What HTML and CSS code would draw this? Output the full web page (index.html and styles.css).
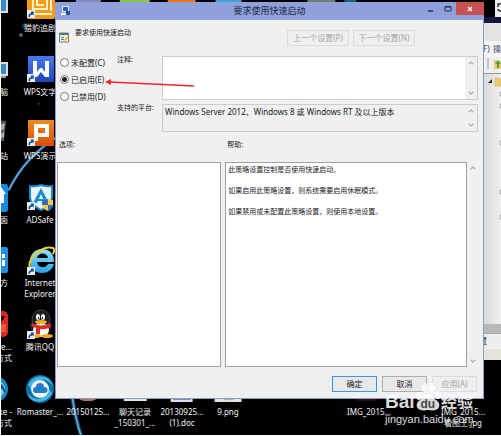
FILE: index.html
```html
<!DOCTYPE html>
<html lang="zh-CN">
<head>
<meta charset="utf-8">
<title>要求使用快速启动</title>
<link rel="stylesheet" href="styles.css">
</head>
<body>
<svg width="0" height="0" class="defs" aria-hidden="true">
  <defs>
    <linearGradient id="blueW" x1="0" y1="0" x2="0" y2="1"><stop offset="0" stop-color="#4a7af0"/><stop offset="1" stop-color="#1f45b8"/></linearGradient>
    <linearGradient id="orangeP" x1="0" y1="0" x2="0" y2="1"><stop offset="0" stop-color="#f08a1c"/><stop offset="1" stop-color="#d84e06"/></linearGradient>
    <linearGradient id="ie" x1="0" y1="0" x2="0" y2="1"><stop offset="0" stop-color="#8fe4fb"/><stop offset="1" stop-color="#2aa2e6"/></linearGradient>
    <symbol id="shortcut" viewBox="0 0 8 8"><rect width="8" height="8" fill="#e8edf2"/><path d="M1.500 7C1.300 4.600 2.400 3.400 4 3.300V1.500h2.800v3.400L5.600 4.600C4 4.600 3 5.400 3 7z" fill="#1c4d93"/></symbol>
    <symbol id="up" viewBox="0 0 6 4"><path d="M.7 3.300 3 1l2.300 2.300" fill="none" stroke="#b0b0b0" stroke-width="1.300"/></symbol>
    <symbol id="down" viewBox="0 0 6 4"><path d="M.7.7 3 3 5.300.7" fill="none" stroke="#b0b0b0" stroke-width="1.300"/></symbol>
  </defs>
</svg>
<main class="desktop">
  <svg class="wallpaper" viewBox="0 0 501 436" preserveAspectRatio="none" aria-hidden="true">
    <g fill="none" stroke-linecap="round">
      <path d="M8 190C19 168 33 152 58 136" stroke="#17496f" stroke-width="3"/>
      <path d="M8 190C19 168 33 152 58 136" stroke="#68b0e8" stroke-width="1.500"/>
      <path d="M71 396Q74 418 80 436" stroke="#17496f" stroke-width="4"/>
      <path d="M71 396Q74 418 80 436" stroke="#68b0e8" stroke-width="1.500"/>
    </g>
    <circle cx="20" cy="35" r="2" fill="#69566f"/><circle cx="24" cy="26" r="3" fill="#0b3845"/>
    <circle cx="38" cy="104" r="1" fill="#0a4a50"/><circle cx="364" cy="419" r="1" fill="#0b5a60"/>
    <path d="M119 0h30v2h-30z" fill="#8bc53f"/><path d="M167 0h28v2h-28z" fill="#e8741c"/><path d="M215 0h26v2h-26z" fill="#3aa6da"/><path d="M307 0h28v2h-28z" fill="#75806a"/><path d="M75 0h25v2H75z" fill="#8b87b8"/>
    <path d="M344 0h12v2h-12z" fill="#17647c"/>
    <ellipse cx="87" cy="398" rx="10" ry="4" fill="#a97b66"/>
    <path d="M123 396h23v6h-23zM170 396h22v7h-22zM214 396h27v7h-27z" fill="#dfe3ea"/>
    <path d="M172 400h18v1h-18z" fill="#7688b8"/><path d="M223 400h10v1h-10z" fill="#aaa"/>
    <path d="M357 398h20v4h-20z" fill="#340b12"/>
  </svg>

  <div class="item edge r0"><svg viewBox="0 0 26 26"><path d="M12 0h14v21H12z" fill="#ddd"/><path d="M12 2h12v17H12z" fill="#388dc5"/></svg></div>
  <div class="item edge r1"><svg viewBox="0 0 26 26"><path d="M12 6h14v14H12z" fill="#ddd"/><path d="M12 8h12v10H12z" fill="#388dc5"/><path d="M14 20h10v2H14z" fill="#999"/></svg><span>电脑</span></div>
  <div class="item edge r2"><svg viewBox="0 0 26 26"><path d="M12 0 24 1 22 21H12z" fill="#545b60"/><path d="m18 5 5-2-1 6-4 2zM18 14l4-2v5l-4 2z" fill="#a9adb0"/></svg><span>回收站</span></div>
  <div class="item edge r3"><svg viewBox="0 0 26 26"><rect width="26" height="28" rx="3" fill="#168be2"/><path d="m19 3 5 7h-2v9h-6v-9z" fill="#fff"/></svg><span>桌面</span></div>
  <div class="item edge r4"><svg viewBox="0 0 26 26"><rect width="26" height="26" rx="2" fill="#258fe4"/><path d="M16 7h3v12h-3zM20 7h3v4h-3zM20 13h3v6h-3z" fill="#fff"/></svg><span>官方</span></div>
  <div class="item edge wide r5"><svg viewBox="0 0 26 26"><rect width="26" height="26" rx="5" fill="#d72b21"/><path d="M16 4c4 3 5-1 7 2l-3 4h-4z" fill="#260706"/><path d="M16 13h8v8h-8z" fill="#ee5540"/></svg><span>Adobe...<br>方式</span></div>
  <div class="item edge wide r6"><svg viewBox="0 0 26 26"><circle cx="13" cy="13" r="13" fill="#1687c7"/><circle cx="14" cy="13" r="9" fill="#79c7ea"/><path d="M17 16l3-6 3 6" stroke="#075587" fill="none" stroke-width="2"/></svg><span>Make -<br>方式</span></div>

  <div class="item r0"><svg viewBox="0 0 26 26"><rect y="-2" width="28" height="29" rx="2" fill="#f39a18"/><path d="M6 0v17h14V6H10v7h7M5 22h20M24 0v19" stroke="#fff1c5" stroke-width="2" fill="none"/><use href="#shortcut" y="18" width="8" height="8"/></svg><span>猎豹追剧</span></div>
  <div class="item r1"><svg viewBox="0 0 26 26"><rect x="1" width="26" height="26" fill="url(#blueW)"/><path d="M6 5h4v11l3-4h2l3 4V5h4v16h-4l-4-5-4 5H6z" fill="#fff"/><use href="#shortcut" y="18" width="8" height="8"/></svg><span>WPS文字</span></div>
  <div class="item r2"><svg viewBox="0 0 26 26"><rect x="1" width="26" height="26" fill="url(#orangeP)"/><path fill-rule="evenodd" d="M7 4h15v13H11v4H7zM11 8v5h7V8z" fill="#fff"/><use href="#shortcut" y="18" width="8" height="8"/></svg><span>WPS演示</span></div>
  <div class="item r3"><svg viewBox="0 0 26 26"><path d="M2 1q6 1 12-1 6 2 12 1v12q0 10-12 14Q2 22 2 13z" fill="#168bd7"/><path d="M4 3q5 1 10-1 5 2 10 1v10q0 8-10 12Q4 20 4 13z" fill="#e9f5fb"/><path d="M14 4 6 19h4l4-9 4 9h4z" fill="#168bd7"/><path d="M10 16h8" stroke="#168bd7" stroke-width="2"/><path d="M15 16q4 0 6-1 2 1 5 1v5q-1 4-5 6-5-2-6-6z" fill="#f3ca50"/><path d="M15 16q4 0 6-1v6h-6zM21 21h5q-1 4-5 6z" fill="#3470b9"/><use href="#shortcut" y="18" width="8" height="8"/></svg><span>ADSafe</span></div>
  <div class="item r4"><svg viewBox="0 0 26 26"><path fill-rule="evenodd" d="M15 2c8 0 12 5 12 13H10c1 6 8 7 11 2h6c-2 6-6 9-12 9C7 26 3 21 3 14S8 2 15 2zM10 11h11C20 5 11 5 10 11z" fill="url(#ie)"/><path d="M4 22C-3 14 15-3 26 1c2 1 1 4 0 6" fill="none" stroke="#f4cc2c" stroke-width="2"/><use href="#shortcut" y="20" width="8" height="8"/></svg><span>Internet<br>Explorer</span></div>
  <div class="item r5"><svg viewBox="0 0 26 26"><ellipse cx="14" cy="15" rx="11" ry="10" fill="#171a22"/><ellipse cx="14" cy="8" rx="9" ry="9" fill="#171a22" stroke="#44474d"/><ellipse cx="14" cy="19" rx="8" ry="7" fill="#fff"/><ellipse cx="11" cy="6" rx="2" ry="3" fill="#fff"/><ellipse cx="16" cy="6" rx="2" ry="3" fill="#fff"/><path d="M11 6h1v2h-1zM15 6h1v2h-1z" fill="#111"/><ellipse cx="14" cy="11" rx="6" ry="2" fill="#f8b316"/><path d="M5 12q9 5 18 0l1 4q-6 3-11 2v5H9v-6l-5-2z" fill="#e02d21"/><ellipse cx="8" cy="25" rx="6" ry="2" fill="#f7a617"/><ellipse cx="20" cy="25" rx="6" ry="2" fill="#f7a617"/><use href="#shortcut" y="20" width="8" height="8"/></svg><span>腾讯QQ</span></div>
  <div class="item r6"><svg viewBox="0 0 26 26"><circle cx="13" cy="13" r="14" fill="#0d6eac"/><path d="M1 9C7-4 25-1 26 11 21 1 8 1 5 14zM25 17C20 29 3 28 0 17c7 8 17 9 22-4z" fill="#43b7df"/><circle cx="13" cy="13" r="9" fill="#eef7fc"/><path d="M9 17a3 3 0 0 1 0-6 4 4 0 0 1 8 0 3 3 0 0 1 1 6z" fill="#287bc5"/></svg><span>Romaster_...</span></div>

  <span class="file f1">20150125...</span>
  <span class="file f2">聊天记录<br>_150301_...</span>
  <span class="file f3">20130925...<br>(1).doc</span>
  <span class="file f4">9.png</span>
  <span class="file f5">IMG_2015...</span>
  <span class="file f6">IMG_2015...<br>看图王.jpg</span>

  <div class="behind" aria-hidden="true">
    <svg class="tile" viewBox="0 0 18 17"><path d="M12 0h6v17h-6z" fill="#eee"/><path d="M18 4h-3v3M15 9q0 2 3 2" stroke="#333" fill="none" stroke-width="1.500"/></svg>
    <div class="b-title"></div>
    <div class="b-head"></div>
    <div class="b-menu"><span>F)</span><span>操</span></div>
    <div class="b-tools"><svg viewBox="0 0 18 14"><path d="M5 1v11" stroke="#999"/><path d="M11 3h3l1 1h3v8h-7z" fill="#ebcb72"/><path d="m12 7 3-4 3 4h-2v4h-2V7z" fill="#45a63b"/></svg></div>
    <div class="b-tree"><svg viewBox="0 0 18 200"><path d="m5 9 4-4v4z" fill="#222"/><path d="M12 4h3l1 1h2v7h-6z" fill="#ebcb72" stroke="#c8a23f" stroke-width=".5"/><g fill="none" stroke="#aaa"><path d="M18 18h-1v4h1M18 30h-1v4h1M18 67h-1v4h1M18 116h-1v4h1M18 141h-1v4h1"/></g></svg></div>
    <div class="b-scroll"></div>
    <div class="b-status">置</div>
    <div class="b-foot"></div>
  </div>

  <section class="dialog" aria-labelledby="title">
    <header class="titlebar">
      <svg class="app" viewBox="0 0 12 12" aria-hidden="true"><path d="M2 1h7v6H2z" fill="#e4edf7"/><path d="M3 2h5v4H3z" fill="#2463c2"/><path d="M6 6h4v4H6z" fill="#234f9d"/><path d="M1 8h5v2H1z" fill="#f2f2f2"/></svg>
      <h1 id="title">要求使用快速启动</h1>
      <div class="caption">
        <button type="button" aria-label="最小化"><svg viewBox="0 0 8 8"><path d="M1 6h5" stroke="#26304f" stroke-width="1.500"/></svg></button>
        <button type="button" aria-label="最大化"><svg viewBox="0 0 8 8"><path d="M1 2h6v4H1z" fill="none" stroke="#26304f"/><path d="M1 1.500h6" stroke="#26304f"/></svg></button>
        <button type="button" class="close" aria-label="关闭"><svg viewBox="0 0 8 8"><path d="m2 2 4 4M6 2 2 6" stroke="#fff" stroke-width="1.300"/></svg></button>
      </div>
    </header>

    <div class="heading">
      <svg viewBox="0 0 11 11" aria-hidden="true"><path d="M.5 1h9v9h-9z" fill="#f4f3df" stroke="#6d7d83"/><path d="M1 1h8v2H1z" fill="#497d8c"/><path d="M2 5h3v1H2zM2 7h3v1H2z" fill="#4c8f62"/><path d="m5 8 4-4 1 1-4 4z" fill="#e3a53b"/></svg>
      <h2>要求使用快速启动</h2>
      <div class="nav">
        <button type="button" disabled>上一个设置(P)</button>
        <button type="button" disabled>下一个设置(N)</button>
      </div>
    </div>

    <form class="settings">
      <fieldset class="states">
        <label><input type="radio" name="state">未配置(C)</label>
        <label><input type="radio" name="state" checked>已启用(E)</label>
        <label><input type="radio" name="state">已禁用(D)</label>
      </fieldset>
      <label class="caption-text" for="comment">注释:</label>
      <div class="box comment"><textarea id="comment"></textarea><div class="bar"><svg viewBox="0 0 6 4"><use href="#up"/></svg><svg viewBox="0 0 6 4"><use href="#down"/></svg></div></div>
      <label class="caption-text" for="platform">支持的平台:</label>
      <div class="box platform"><textarea id="platform" readonly>Windows Server 2012、Windows 8 或 Windows RT 及以上版本</textarea><div class="bar"><svg viewBox="0 0 6 4"><use href="#up"/></svg><svg viewBox="0 0 6 4"><use href="#down"/></svg></div></div>
    </form>

    <div class="panels">
      <h3>选项:</h3>
      <h3>帮助:</h3>
      <div class="panel"></div>
      <div class="panel help">
        <p>此策略设置控制是否使用快速启动。</p>
        <p>如果启用此策略设置，则系统需要启用休眠模式。</p>
        <p>如果禁用或未配置此策略设置，则使用本地设置。</p>
      </div>
      <div class="bar"><svg viewBox="0 0 6 4"><use href="#up"/></svg><svg viewBox="0 0 6 4"><use href="#down"/></svg></div>
    </div>

    <footer class="actions">
      <button type="button" class="ok">确定</button>
      <button type="button">取消</button>
      <button type="button" disabled>应用(A)</button>
    </footer>

    <svg class="pointer" viewBox="0 0 90 10" aria-hidden="true"><path d="M5 4 89 8" stroke="#f5262b" stroke-width="1.500"/><path d="M0 4 6 1v6z" fill="#f5262b"/></svg>
  </section>

  <div class="mark">
    <div class="brand"><span>Bai</span><div class="paw"><svg viewBox="0 0 26 28" aria-hidden="true"><g fill="#fff"><ellipse cx="4" cy="13" rx="3" ry="4"/><ellipse cx="10" cy="5" rx="3" ry="5"/><ellipse cx="17" cy="5" rx="3" ry="5"/><ellipse cx="23" cy="12" rx="3" ry="4"/><path d="M13 11c4 0 5 4 8 6s4 4 3 7-5 4-11 3c-6 1-10 0-11-3s0-5 3-7 4-6 8-6z"/></g></svg><b>du</b></div><span>经验</span></div>
    <span class="url">jingyan.baidu.com</span>
  </div>
</main>
</body>
</html>
```

FILE: styles.css
```css
* { box-sizing: border-box; }
html, body { height: 100%; }
body {
  margin: 0;
  background: #fff;
  font: 8px/11px "Noto Sans", "Noto Sans CJK SC", sans-serif;
  color: #222;
  padding: 0 0 1px 1px;
  overflow: hidden;
}
h1, h2, h3, p { margin: 0; font-weight: 400; }
svg { display: block; }
button, textarea { font: inherit; color: inherit; }
.defs { position: absolute; }
.desktop { position: relative; height: 100%; background: #000; overflow: hidden; }
.wallpaper { position: absolute; inset: 0; width: 100%; height: 100%; }

/* Desktop shortcuts on a 64px pitch */
.item, .file { position: absolute; width: 60px; text-align: center; color: #f2f2f2; white-space: nowrap; }
.item { left: 9px; }
.item svg { width: 26px; height: 26px; margin: 0 auto 4px; overflow: visible; }
.item.edge { left: -53px; text-align: right; }
.item.edge svg { margin: 0 0 4px 34px; }
.wide span { display: block; margin-right: -4px; }
.r0 { top: -8px; }
.r1 { top: 56px; }
.r2 { top: 120px; }
.r3 { top: 184px; }
.r4 { top: 247px; }
.r5 { top: 311px; }
.r6 { top: 376px; }
.file { top: 406px; }
.f1 { left: 57px; }
.f2 { left: 104px; }
.f3 { left: 151px; }
.f4 { left: 197px; }
.f5 { left: 338px; }
.f6 { left: 432px; }

/* Window partly hidden at the right */
.behind { position: absolute; right: 0; top: 0; width: 18px; height: 360px; display: flex; flex-direction: column; background: #eee; }
.tile { height: 17px; background: #000; }
.b-title { height: 6px; background: #15153c; }
.b-head { height: 18px; background: #e4e4e4; }
.b-menu { height: 16px; display: flex; justify-content: space-between; background: #f4f4f4; color: #345; line-height: 16px; overflow: hidden; white-space: nowrap; }
.b-tools { height: 17px; background: #eee; border-bottom: 1px solid #999; }
.b-tree { flex: 1; background: linear-gradient(90deg, #d8d8d8, #efefef); }
.b-tree svg { width: 18px; height: 200px; }
.b-scroll { height: 9px; background: #b8b8b8; }
.b-status { height: 16px; border-top: 1px solid #aaa; background: #eee; line-height: 14px; overflow: hidden; text-indent: -4px; }
.b-foot { height: 11px; background: #e4e4d8; }

/* Policy dialog */
.dialog { position: absolute; inset: 2px 17px 36px 54px; display: flex; flex-direction: column; background: #f0f0f0; border: solid #8c9cc8; border-width: 0 1px 1px; }
.titlebar { display: grid; grid-template-columns: 80px 1fr 80px; align-items: center; height: 18px; background: #8fa0da; margin: 0 -1px; }
.app { width: 12px; height: 12px; margin-left: 5px; }
.titlebar h1 { font-size: 9px; line-height: 18px; text-align: center; color: #1d2440; }
.caption { display: flex; justify-content: flex-end; align-self: start; }
.caption button { width: 17px; height: 13px; padding: 0; border: 0; background: none; display: grid; place-items: center; }
.caption svg { width: 8px; height: 8px; }
.caption .close { width: 28px; background: #c75050; }

.heading { display: flex; align-items: center; height: 27px; padding: 0 68px 0 3px; margin-top: 4px; }
.heading > svg { width: 11px; height: 11px; }
.heading h2 { flex: 1; margin: 0 0 0 5px; font-size: 7px; line-height: 17px; align-self: flex-start; }
.nav { display: flex; gap: 4px; }
.nav button { width: 62px; }
.dialog > div button, .actions button { height: 16px; padding: 0; border: 1px solid #adadad; background: #e8e8e8; line-height: 14px; }
.dialog > div button:disabled, .actions button:disabled { border-color: #dcdcdc; background: #efefef; color: #a5a5a5; }

.settings { display: grid; grid-template-columns: 57px 45px 1fr; grid-template-rows: 44px 28px; row-gap: 4px; margin: 5px 5px 0 4px; }
.states { grid-row: 1 / 3; margin: 0; padding: 1px 0 0; border: 0; display: flex; flex-direction: column; gap: 6px; }
.states label { display: flex; align-items: center; gap: 2px; white-space: nowrap; }
.states input { appearance: none; flex: none; width: 9px; height: 9px; margin: 0; border: 1px solid #777; border-radius: 50%; background: #fff; }
.states input:checked { background: radial-gradient(circle, #222 0 2px, #fff 3px); }
.caption-text { font-size: 7px; line-height: 8px; white-space: nowrap; }
.box { display: flex; border: 1px solid #ccc; background: #f0f0f0; }
.comment { background: #fff; }
.box textarea { flex: 1; min-width: 0; border: 0; outline: 0; padding: 1px 2px; background: none; resize: none; overflow: hidden; }
.bar { width: 12px; padding: 4px 3px; display: flex; flex-direction: column; justify-content: space-between; background: #f0f0f0; }
.bar svg { width: 6px; height: 4px; }

.panels { flex: 1; display: grid; grid-template-columns: 165fr 243fr 12px; grid-template-rows: 26px 1fr; column-gap: 4px; margin: 4px 0 0 1px; }
.panels h3 { font-size: 7px; line-height: 17px; padding-left: 2px; }
.panels h3:nth-child(2) { grid-column: 2 / 4; }
.panel { border: 1px solid #a0a0a0; background: #fff; }
.panels .bar { margin-left: -4px; }
.help { padding: 1px 2px; font-size: 7px; }
.help p { margin-bottom: 10px; }

.actions { display: flex; justify-content: flex-end; gap: 5px; padding: 9px 6px 6px; }
.actions button { width: 45px; }
.actions .ok { border-color: #3399ff; }
.pointer { position: absolute; left: 49px; top: 76px; width: 90px; height: 10px; }

/* Site mark */
.mark { position: absolute; right: 28px; bottom: 8px; width: 88px; color: #fff; opacity: .85; font-family: "Liberation Sans", "Noto Sans CJK SC", sans-serif; }
.brand { display: flex; align-items: flex-end; justify-content: space-between; height: 28px; font-size: 16px; line-height: 18px; font-weight: 700; white-space: nowrap; }
.brand > span:first-child { font-size: 19px; }
.paw { position: relative; width: 26px; }
.paw svg { width: 26px; height: 28px; }
.paw b { position: absolute; inset: auto 0 0; text-align: center; color: #555; font-size: 12px; line-height: 14px; }
.url { display: block; font-size: 11px; line-height: 16px; white-space: nowrap; }
```
